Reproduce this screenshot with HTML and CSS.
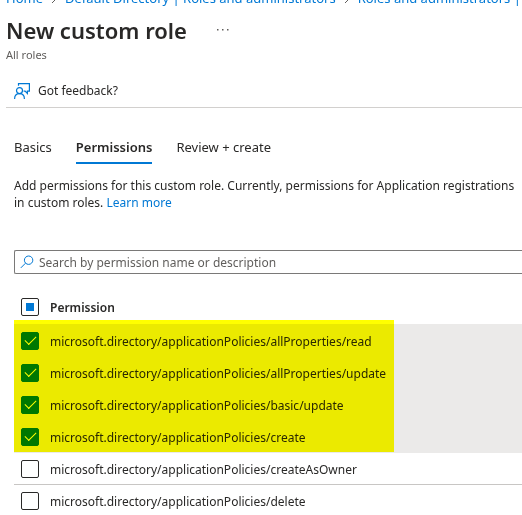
FILE: index.html
```html
<!DOCTYPE html>
<html lang="en">
<head>
<meta charset="utf-8">
<title>New custom role</title>
<link rel="stylesheet" href="styles.css">
</head>
<body>
<nav class="breadcrumb" aria-label="Breadcrumb">
  <a href="#">Home</a>
  <svg class="chevron" viewBox="0 0 8 10"><path d="M2 1l4 4-4 4"/></svg>
  <a href="#">Default Directory | Roles and administrators</a>
  <svg class="chevron" viewBox="0 0 8 10"><path d="M2 1l4 4-4 4"/></svg>
  <a href="#">Roles and administrators | All roles</a>
</nav>
<header class="header">
  <div class="title-row">
    <h1 class="title">New custom role</h1>
    <button class="more" type="button" aria-label="More">
      <svg viewBox="0 0 12 2"><path d="M0 0h1.5v1.5H0zM5 0h1.5v1.5H5zM10 0h1.5v1.5H10z"/></svg>
    </button>
  </div>
  <p class="subtitle">All roles</p>
  <div class="toolbar">
    <button class="feedback" type="button">
      <svg viewBox="0 0 16 16"><path d="M4.5 2.8V.6h10.9v7.6h-2v2.3l-2.3-2.3H9.6"/><circle cx="5.5" cy="7.6" r="3"/><path d="M.6 15.9c0-3.1 2-5.2 4.9-5.2s4.9 2.1 4.9 5.2"/></svg>
      <span>Got feedback?</span>
    </button>
  </div>
</header>
<main class="content">
  <div class="tabs" role="tablist">
    <button class="tab" type="button" role="tab">Basics</button>
    <button class="tab tab-active" type="button" role="tab" aria-selected="true">Permissions</button>
    <button class="tab" type="button" role="tab">Review + create</button>
  </div>
  <p class="intro">Add permissions for this custom role. Currently, permissions for Application registrations<br>in custom roles. <a href="#">Learn more</a></p>
  <div class="search">
    <svg viewBox="0 0 14 14"><circle cx="8.6" cy="5.2" r="4.2"/><path d="M5.5 8.2L.8 12.9"/></svg>
    <input type="search" aria-label="Search permissions" placeholder="Search by permission name or description">
  </div>
  <div class="permissions">
    <table class="table">
      <thead>
        <tr><th class="pick"><input class="box box-mixed" type="checkbox" id="all"></th><th><label for="all">Permission</label></th></tr>
      </thead>
      <tbody>
        <tr class="selected"><td class="pick"><input class="box" type="checkbox" id="p1" checked></td><td><label for="p1">microsoft.directory/applicationPolicies/allProperties/read</label></td></tr>
        <tr class="selected"><td class="pick"><input class="box" type="checkbox" id="p2" checked></td><td><label for="p2">microsoft.directory/applicationPolicies/allProperties/update</label></td></tr>
        <tr class="selected"><td class="pick"><input class="box" type="checkbox" id="p3" checked></td><td><label for="p3">microsoft.directory/applicationPolicies/basic/update</label></td></tr>
        <tr class="selected"><td class="pick"><input class="box" type="checkbox" id="p4" checked></td><td><label for="p4">microsoft.directory/applicationPolicies/create</label></td></tr>
        <tr><td class="pick"><input class="box" type="checkbox" id="p5"></td><td><label for="p5">microsoft.directory/applicationPolicies/createAsOwner</label></td></tr>
        <tr><td class="pick"><input class="box" type="checkbox" id="p6"></td><td><label for="p6">microsoft.directory/applicationPolicies/delete</label></td></tr>
      </tbody>
    </table>
    <div class="marker"></div>
  </div>
</main>
</body>
</html>
```
FILE: styles.css
```css
* { box-sizing: border-box; }
body {
  margin: 0;
  background: #fff;
  color: #292827;
  font: 12px/17px "Noto Sans", "Segoe UI", sans-serif;
  overflow: hidden;
}
a { color: #0078d4; text-decoration: none; }
button { border: 0; padding: 0; background: none; color: inherit; font: inherit; }
svg { fill: none; stroke: #0078d4; flex: none; }

.breadcrumb {
  display: flex;
  align-items: center;
  gap: 7px;
  height: 17px;
  margin: -10px 0 0 6px;
  overflow: hidden;
  font-size: 13px;
  white-space: nowrap;
}
.chevron { width: 8px; height: 10px; stroke: #605e5c; }

.header { padding-left: 6px; }
.title-row { display: flex; align-items: center; gap: 30px; padding-top: 7px; }
.title { margin: 0; font-size: 22px; line-height: 32px; font-weight: 600; }
.more { display: flex; }
.more svg { width: 12px; height: 2px; fill: #605e5c; stroke: none; }
.subtitle { margin: 1px 0 0; color: #605e5c; font-size: 11px; line-height: 16px; }
.toolbar { margin-top: 10px; padding: 9px 8px 8px; border-bottom: 1px solid #d2d0ce; }
.feedback { display: flex; align-items: center; gap: 8px; }
.feedback svg { width: 16px; height: 16px; stroke-width: 1.2; }

.content { padding-left: 14px; }
.tabs { display: flex; gap: 24px; padding-top: 28px; }
.tab { height: 28px; padding-bottom: 4px; border-bottom: 2px solid transparent; font-size: 13px; }
.tab-active { border-color: #0078d4; font-weight: 600; }
.intro { margin: 13px 0 39px; white-space: nowrap; }

.search {
  display: flex;
  align-items: center;
  gap: 5px;
  height: 24px;
  padding-left: 5px;
  border: 1px solid #7a7978;
  border-right: 0;
  border-radius: 2px 0 0 2px;
}
.search svg { width: 14px; height: 14px; }
.search input { flex: 1; min-width: 0; border: 0; padding: 0; outline: 0; font: inherit; background: none; }
.search input::placeholder { color: #605e5c; }

.permissions { position: relative; margin-top: 17px; }
.table { width: 100%; border-collapse: separate; border-spacing: 0; }
th, td { height: 32px; padding: 1px 0 0; text-align: left; border-bottom: 1px solid #c8c6c4; }
th { height: 34px; padding: 0 0 1px; font-weight: 600; border-color: #ebeae9; }
.selected td { background: #ebeae9; border-color: #ebeae9; }
.pick { width: 36px; padding-left: 7px; }
.box {
  display: block;
  appearance: none;
  width: 18px;
  height: 18px;
  margin: 0;
  border: 1px solid #292827;
  border-radius: 2px;
  background: #fff;
}
.box-mixed { background: #0078d4 content-box; padding: 4px; }
.box:checked { position: relative; border-color: #0078d4; background: #0078d4; }
.box:checked::after {
  content: "";
  position: absolute;
  left: 3px;
  top: 3px;
  width: 10px;
  height: 5px;
  border: solid #fff;
  border-width: 0 0 1px 1px;
  transform: rotate(-45deg);
}
.marker {
  position: absolute;
  left: 0;
  top: 29px;
  width: 380px;
  height: 132px;
  background: #ff0;
  mix-blend-mode: multiply;
}
```
